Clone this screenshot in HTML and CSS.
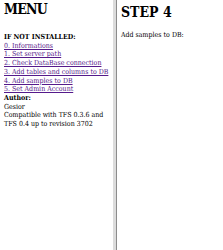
FILE: index.html
```html
<!DOCTYPE html>
<html>
<head>
    <meta charset="utf-8">
    <title>Gesior installer</title>
    <link rel="stylesheet" href="styles.css">
</head>
<body>
    <div class="frames">
        <div class="menu-frame">
            <h1>MENU</h1>
            <b>IF NOT INSTALLED:</b><br>
            <a href="#">0. Informations</a><br>
            <a href="#">1. Set server path</a><br>
            <a href="#">2. Check DataBase connection</a><br>
            <a href="#">3. Add tables and columns to DB</a><br>
            <a href="#">4. Add samples to DB</a><br>
            <a href="#">5. Set Admin Account</a><br>
            <b>Author:</b><br>
            Gesior<br>
            Compatible with TFS 0.3.6 and TFS 0.4 up to revision 3702
        </div>
        <div class="divider"></div>
        <div class="main-frame">
            <h1>STEP 4</h1>
            Add samples to DB:<br>
        </div>
    </div>
</body>
</html>
```
FILE: styles.css
```css
html,
body {
    margin: 0;
    background: #fff;
}

body {
    font-family: "DejaVu Serif Condensed", "DejaVu Serif", serif;
    font-stretch: condensed;
    font-size: 7px;
    line-height: 8.7px;
    color: #000;
}

.frames {
    display: flex;
    height: 250px;
}

.menu-frame {
    width: 109px;
    padding: 0 0 0 4px;
    overflow: hidden;
}

.divider {
    width: 3px;
    background: #dcdcdc;
    border-right: 1px solid #8c8c8c;
}

.main-frame {
    flex: 1;
    padding: 0 4px;
}

h1 {
    font-size: 14px;
    line-height: 18px;
    margin: 0 0 15px;
}

.menu-frame h1 {
    letter-spacing: -0.8px;
}

.main-frame h1 {
    margin: 3px 0 10px;
}

a {
    color: #551a8b;
}
```
